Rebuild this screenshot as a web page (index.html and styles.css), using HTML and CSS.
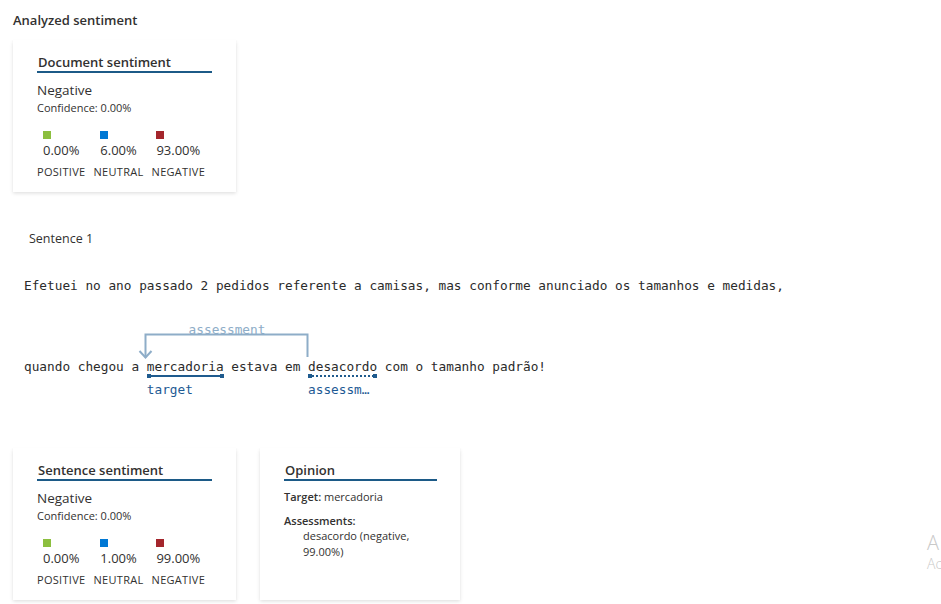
FILE: index.html
```html
<!DOCTYPE html>
<html lang="pt">
<head>
<meta charset="utf-8">
<title>Analyzed sentiment</title>
<link rel="stylesheet" href="styles.css">
</head>
<body>
<div class="page">
  <h2 class="heading">Analyzed sentiment</h2>
  <div class="card">
    <div class="card-title">Document sentiment</div>
    <div class="label-main">Negative</div>
    <div class="conf">Confidence: 0.00%</div>
    <div class="scores">
      <div class="score">
        <div class="score-top"><span class="sq sq-pos"></span><span class="pct">0.00%</span></div>
        <span class="score-name">POSITIVE</span>
      </div>
      <div class="score">
        <div class="score-top"><span class="sq sq-neu"></span><span class="pct">6.00%</span></div>
        <span class="score-name">NEUTRAL</span>
      </div>
      <div class="score">
        <div class="score-top"><span class="sq sq-neg"></span><span class="pct">93.00%</span></div>
        <span class="score-name">NEGATIVE</span>
      </div>
    </div>
  </div>

  <div class="sentence-title">Sentence 1</div>
  <div class="mono line1">Efetuei no ano passado 2 pedidos referente a camisas, mas conforme anunciado os tamanhos e medidas,</div>
  <div class="mono line2"><svg class="arrow" width="180" height="40" viewBox="0 0 180 40"><polyline points="160.5,36 160.5,13.5 -1.5,13.5 -1.5,36.5" fill="none" stroke="#8eadc8" stroke-width="2"/><polyline points="-7.5,30 -1.5,36.5 4.5,30" fill="none" stroke="#8eadc8" stroke-width="2"/><text x="80" y="13" text-anchor="middle" class="arrow-label">assessment</text></svg>quando chegou a <span class="ent ent-target">mercadoria<span class="ent-line"></span><span class="ent-tag">target</span></span> estava em <span class="ent ent-assess">desacordo<span class="ent-line dotted"></span><span class="ent-tag">assessm…</span></span> com o tamanho padrão!</div>

  <div class="cards-row">
    <div class="card">
      <div class="card-title">Sentence sentiment</div>
      <div class="label-main">Negative</div>
      <div class="conf">Confidence: 0.00%</div>
      <div class="scores">
        <div class="score">
          <div class="score-top"><span class="sq sq-pos"></span><span class="pct">0.00%</span></div>
          <span class="score-name">POSITIVE</span>
        </div>
        <div class="score">
          <div class="score-top"><span class="sq sq-neu"></span><span class="pct">1.00%</span></div>
          <span class="score-name">NEUTRAL</span>
        </div>
        <div class="score">
          <div class="score-top"><span class="sq sq-neg"></span><span class="pct">99.00%</span></div>
          <span class="score-name">NEGATIVE</span>
        </div>
      </div>
    </div>
    <div class="card card-opinion">
      <div class="card-title">Opinion</div>
      <div class="op-row"><b>Target:</b> mercadoria</div>
      <div class="op-row op-assess"><b>Assessments:</b></div>
      <div class="op-item">desacordo (negative, 99.00%)</div>
    </div>
  </div>
</div>
<div class="watermark"><div class="wm-big">A</div><div class="wm-small">Ac</div></div>
</body>
</html>
```
FILE: styles.css
```css
html, body {
  margin: 0;
  padding: 0;
  background: #ffffff;
}
body {
  width: 941px;
  height: 604px;
  overflow: hidden;
  position: relative;
  font-family: "Open Sans", "Noto Sans", sans-serif;
  color: #323130;
}
.page {
  padding: 11px 13px 0;
}
.heading {
  margin: 0 0 11px;
  font-size: 13px;
  line-height: 18px;
  font-weight: 600;
}
.card {
  box-sizing: border-box;
  width: 223px;
  height: 152px;
  padding: 14px 24px 0 24px;
  background: #fff;
  box-shadow: 0 1.6px 3.6px rgba(0, 0, 0, 0.13), 0 0.3px 0.9px rgba(0, 0, 0, 0.11);
}
.card-title {
  font-size: 13px;
  line-height: 17px;
  font-weight: 600;
  padding-left: 1px;
  border-bottom: 2px solid #1c5a87;
  width: 175px;
  box-sizing: border-box;
}
.label-main {
  margin-top: 7px;
  font-size: 13.5px;
  line-height: 20px;
}
.conf {
  font-size: 11px;
  line-height: 15px;
}
.scores {
  display: flex;
  gap: 8px;
  margin-top: 16px;
}
.score {
  display: flex;
  flex-direction: column;
  align-items: center;
}
.score-top {
  display: flex;
  flex-direction: column;
  align-items: flex-start;
}
.sq {
  width: 8px;
  height: 8px;
  display: block;
}
.sq-pos { background: #8cbf3f; }
.sq-neu { background: #0078d4; }
.sq-neg { background: #a4262c; }
.pct {
  margin-top: 2px;
  font-size: 13px;
  line-height: 18px;
}
.score-name {
  margin-top: 5px;
  font-size: 11px;
  line-height: 15px;
  letter-spacing: 0.3px;
}
.sentence-title {
  margin: 38px 0 0 16px;
  font-size: 12.5px;
  line-height: 18px;
}
.mono {
  font-family: "DejaVu Sans Mono", "Liberation Mono", monospace;
  font-size: 12.75px;
  line-height: 18px;
  white-space: pre;
  margin-left: 11px;
  color: #2b2b2b;
}
.line1 {
  margin-top: 29px;
}
.line2 {
  margin-top: 63px;
  position: relative;
}
.arrow {
  position: absolute;
  left: 123px;
  top: -37px;
  overflow: visible;
}
.arrow-label {
  font-family: "DejaVu Sans Mono", "Liberation Mono", monospace;
  font-size: 12.75px;
  fill: #8eadc8;
}
.ent {
  position: relative;
  display: inline-block;
}
.ent-line {
  position: absolute;
  left: 0;
  right: 0;
  top: 17px;
  height: 2px;
  background: #1f5b8e;
}
.ent-line::before,
.ent-line::after {
  content: "";
  position: absolute;
  top: -1px;
  width: 4px;
  height: 4px;
  background: #1f5b8e;
}
.ent-line::before { left: 0; }
.ent-line::after { right: 0; }
.ent-line.dotted {
  background: repeating-linear-gradient(90deg, #1f5b8e 0 2px, transparent 2px 4px);
}
.ent-tag {
  position: absolute;
  left: 0;
  top: 23px;
  color: #1e5a94;
  white-space: nowrap;
}
.cards-row {
  display: flex;
  gap: 24px;
  margin-top: 72px;
}
.card-opinion {
  width: 200px;
}
.card-opinion .card-title {
  width: 153px;
}
.op-row {
  margin-top: 8px;
  font-size: 11px;
  line-height: 15px;
}
.op-row b {
  font-weight: 600;
}
.op-assess {
  margin-top: 9px;
}
.op-item {
  margin-left: 19px;
  width: 122px;
  font-size: 11px;
  line-height: 16px;
}
.watermark {
  position: absolute;
  left: 927px;
  top: 531px;
  color: #c9c9c9;
  white-space: nowrap;
}
.wm-big {
  font-size: 20px;
  line-height: 24px;
  font-weight: 300;
}
.wm-small {
  font-size: 14px;
  line-height: 18px;
  font-weight: 300;
}
```
